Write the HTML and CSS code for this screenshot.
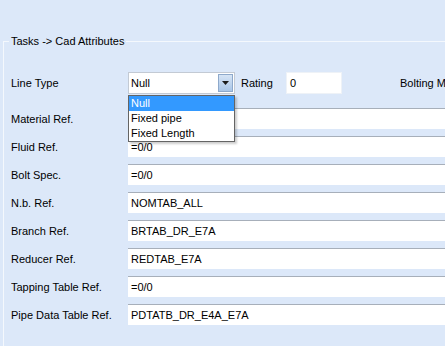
FILE: index.html
```html
<!DOCTYPE html>
<html lang="en">
<head>
  <meta charset="UTF-8">
  <title>Cad Attributes</title>
  <link rel="stylesheet" href="styles.css">
</head>
<body>
  <fieldset class="group">
    <legend>Tasks -&gt; Cad Attributes</legend>

    <!-- first row: line type / rating / bolting -->
    <div class="row row-first">
      <span class="label">Line Type</span>
      <div class="combo">
        <div class="combo-box">
          <span class="combo-text">Null</span>
          <span class="combo-btn">
            <svg width="7" height="4" viewBox="0 0 7 4"><path d="M0,0 L7,0 L3.5,4 z" fill="#1a1a1a" /></svg>
          </span>
        </div>
        <ul class="combo-list">
          <li class="selected">Null</li>
          <li>Fixed pipe</li>
          <li>Fixed Length</li>
        </ul>
      </div>
      <span class="label-inline">Rating</span>
      <div class="field field-small">0</div>
      <span class="label-inline label-bolting">Bolting Method</span>
    </div>

    <div class="row"><span class="label">Material Ref.</span><div class="field"></div></div>
    <div class="row"><span class="label">Fluid Ref.</span><div class="field">=0/0</div></div>
    <div class="row"><span class="label">Bolt Spec.</span><div class="field">=0/0</div></div>
    <div class="row"><span class="label">N.b. Ref.</span><div class="field">NOMTAB_ALL</div></div>
    <div class="row"><span class="label">Branch Ref.</span><div class="field">BRTAB_DR_E7A</div></div>
    <div class="row"><span class="label">Reducer Ref.</span><div class="field">REDTAB_E7A</div></div>
    <div class="row"><span class="label">Tapping Table Ref.</span><div class="field">=0/0</div></div>
    <div class="row"><span class="label">Pipe Data Table Ref.</span><div class="field">PDTATB_DR_E4A_E7A</div></div>
  </fieldset>
</body>
</html>
```

FILE: styles.css
```css
body {
  font-family: "Liberation Sans", Arial, sans-serif;
  font-size: 11px;
  color: #000;
  background: #dce8f9;
  margin: 0;
  padding: 35px 0 0 0;
  width: 445px;
  height: 346px;
  overflow: hidden;
  box-sizing: border-box;
}
.group {
  margin: 0 0 0 3px;
  padding: 0 0 0 7px;
  border: 1px solid #f4f8fd;
  border-right: none;
  border-bottom: none;
  min-width: 0;
  width: 442px;
  height: 311px;
  box-sizing: border-box;
}
.group legend {
  padding: 0 2px;
  margin-left: -2px;
  line-height: 13px;
}
.row {
  display: flex;
  align-items: center;
  height: 21px;
  margin-bottom: 7px;
  overflow: hidden;
}
.row-first {
  height: 22px;
  margin-top: 24px;
  margin-bottom: 14px;
}
.label {
  width: 117px;
  flex-shrink: 0;
}
.field {
  flex: 1;
  height: 21px;
  line-height: 20px;
  padding-left: 3px;
  background: #fff;
  border-top: 1px solid #a7afba;
  box-sizing: border-box;
}
.field-small {
  flex: none;
  width: 56px;
  height: 22px;
  border: 1px solid #eef2f7;
  padding-left: 3px;
}
.label-inline {
  margin: 0 0 0 6px;
  width: 45px;
  flex-shrink: 0;
}
.label-bolting {
  margin-left: 58px;
  white-space: nowrap;
}
.row-first {
  overflow: visible;
}
.combo {
  position: relative;
  width: 107px;
  height: 22px;
  flex-shrink: 0;
}
.combo-box {
  display: flex;
  height: 22px;
  background: #fff;
  border: 1px solid #c3cad4;
  box-sizing: border-box;
}
.combo-text {
  flex: 1;
  line-height: 20px;
  padding-left: 2px;
}
.combo-btn {
  width: 15px;
  margin: 1px;
  display: flex;
  align-items: center;
  justify-content: center;
  background: linear-gradient(#d6e4f5, #a9c6e8);
  border: 1px solid #8ea9cb;
  box-sizing: border-box;
}
.combo-list {
  position: absolute;
  top: 23px;
  left: 0;
  width: 107px;
  margin: 0;
  padding: 0;
  list-style: none;
  background: #fff;
  border: 1px solid #646464;
  box-sizing: border-box;
  box-shadow: 2px 2px 2px rgba(0, 0, 0, 0.2);
  z-index: 1;
}
.combo-list li {
  height: 15px;
  line-height: 15px;
  padding-left: 2px;
}
.combo-list li.selected {
  background: #3399ff;
  color: #fff;
}
```
